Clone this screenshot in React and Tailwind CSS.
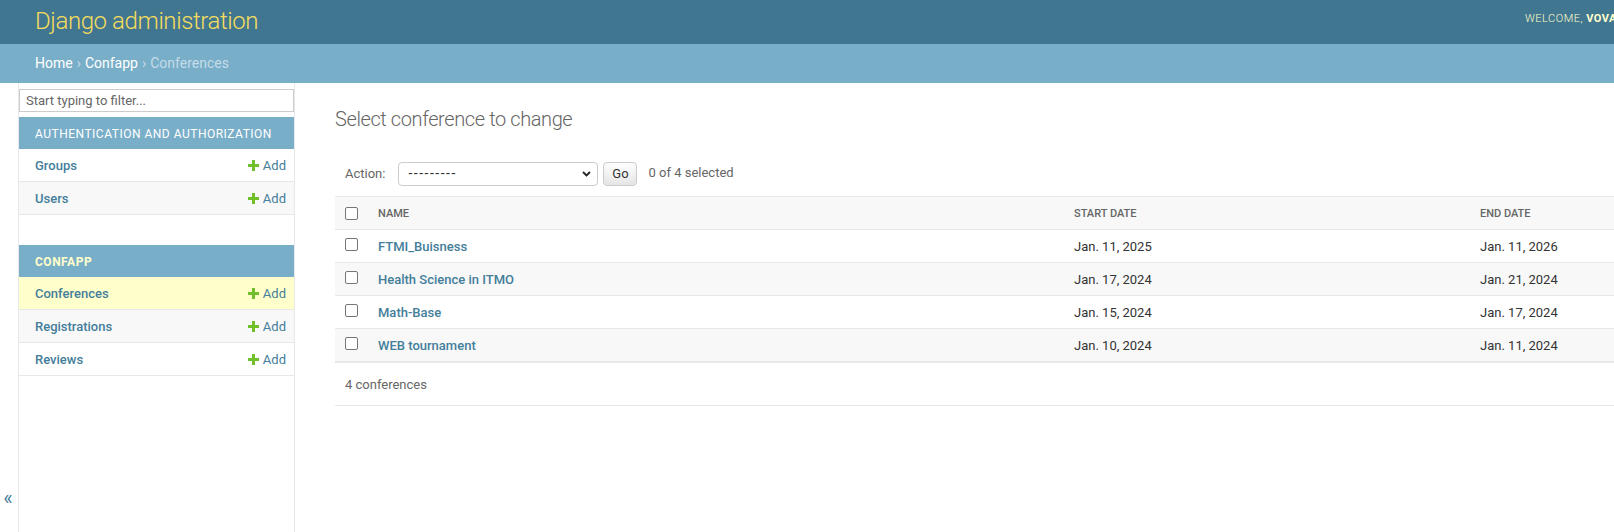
import React from "react";

function Plus() {
  return (
    <svg width="11" height="11" viewBox="0 0 11 11" className="shrink-0">
      <path d="M4 0h3v4h4v3H7v4H4V7H0V4h4z" fill="#70bf2b" />
    </svg>
  );
}

function Check({ cls }) {
  return (
    <span
      className={
        "inline-block w-[13px] h-[13px] border border-[#767676] rounded-[2px] bg-white " +
        (cls || "")
      }
    />
  );
}

function SideRow({ name, bg }) {
  return (
    <div
      className={
        "flex items-center justify-between h-[33px] border-b border-[#e8e8e8] pl-[16px] pr-[8px] pt-[2px] " +
        bg
      }
    >
      <span className="text-[13px] font-medium text-[#447e9b]">{name}</span>
      <span className="flex items-center gap-[4px] text-[13px] text-[#447e9b]">
        <span className="-mt-[2px]">
          <Plus />
        </span>
        Add
      </span>
    </div>
  );
}

const rows = [
  ["FTMI_Buisness", "Jan. 11, 2025", "Jan. 11, 2026", "bg-white"],
  ["Health Science in ITMO", "Jan. 17, 2024", "Jan. 21, 2024", "bg-[#f8f8f8]"],
  ["Math-Base", "Jan. 15, 2024", "Jan. 17, 2024", "bg-white"],
  ["WEB tournament", "Jan. 10, 2024", "Jan. 11, 2024", "bg-[#f8f8f8]"],
];

export default function App() {
  return (
    <div className="w-[1614px] h-[532px] overflow-hidden bg-white text-[#333] font-['Roboto',sans-serif]">
      {/* Header */}
      <header className="h-[44px] bg-[#417690] flex items-start pl-[35px]">
        <h1 className="mt-[5px] leading-[32px] text-[24px] tracking-[-0.4px] font-light text-[#f5dd5d] whitespace-nowrap">
          Django administration
        </h1>
        <div className="ml-auto w-[89px] mt-[11px] whitespace-nowrap text-[11px] leading-[16px] uppercase tracking-[0.5px] text-[#ffffcc] font-light">
          Welcome, <strong className="font-bold">vova</strong>
        </div>
      </header>

      {/* Breadcrumbs */}
      <div className="h-[39px] bg-[#79aec8] flex items-center pl-[35px] text-[14px] text-[#c4dce8]">
        <span className="text-white">Home</span>
        <span className="mx-[4px]">›</span>
        <span className="text-white">Confapp</span>
        <span className="mx-[4px]">›</span>
        <span>Conferences</span>
      </div>

      {/* Body */}
      <div className="flex h-[449px]">
        {/* toggle */}
        <div className="w-[19px] shrink-0 border-r border-[#e8e8e8] flex flex-col items-center justify-end pb-[24px]">
          <span className="text-[20px] leading-[20px] text-[#447e9b] -ml-[2px]">«</span>
        </div>

        {/* sidebar */}
        <nav className="w-[276px] shrink-0 border-r border-[#e8e8e8]">
          <div className="mt-[6px] mb-[5px] h-[23px] border border-[#ccc] flex items-center px-[6px] text-[13px] text-[#666]">
            Start typing to filter...
          </div>

          <div className="mb-[30px]">
            <div className="h-[32px] bg-[#79aec8] flex items-center pl-[16px] pt-[1px] text-[12px] uppercase tracking-[0.5px] text-white">
              Authentication and Authorization
            </div>
            <SideRow name="Groups" bg="bg-white" />
            <SideRow name="Users" bg="bg-[#f8f8f8]" />
          </div>

          <div>
            <div className="h-[32px] bg-[#79aec8] flex items-center pl-[16px] pt-[1px] text-[12px] uppercase tracking-[0.5px] text-[#ffffcc] font-bold">
              Confapp
            </div>
            <SideRow name="Conferences" bg="bg-[#ffffcc]" />
            <SideRow name="Registrations" bg="bg-[#f8f8f8]" />
            <SideRow name="Reviews" bg="bg-white" />
          </div>
        </nav>

        {/* main */}
        <main className="flex-1 min-w-0 pl-[40px] pt-[20px]">
          <h1 className="h-[28px] leading-[28px] mt-[2px] mb-[18px] text-[20px] tracking-[-0.4px] font-light text-[#666] whitespace-nowrap">
            Select conference to change
          </h1>

          <div className="h-[45px] flex items-center pl-[10px] text-[13px] text-[#666] whitespace-nowrap">
            <span className="pt-[1px]">Action:</span>
            <div className="ml-[13px] w-[200px] h-[24px] border border-[#ccc] rounded-[4px] bg-white flex items-center justify-between pl-[9px] pr-[6px] text-[14px] text-[#333]">
              <span className="tracking-[1.5px]">---------</span>
              <svg width="9" height="6" viewBox="0 0 9 6">
                <path d="M1 1l3.5 3.5L8 1" stroke="#222" strokeWidth="1.8" fill="none" />
              </svg>
            </div>
            <div className="ml-[5px] w-[34px] h-[24px] border border-[#ccc] rounded-[4px] bg-white shadow-[inset_0_-15px_20px_-10px_rgba(0,0,0,0.15)] flex items-center justify-center text-[13px] text-[#333]">
              Go
            </div>
            <span className="ml-[11px] -mt-[2px]">0 of 4 selected</span>
          </div>

          <div className="w-[1543px]">
            <div className="grid grid-cols-[35px_696px_406px_406px] h-[34px] border-t border-b border-[#e8e8e8] bg-[#f8f8f8] items-center text-[11px] uppercase text-[#666] font-medium">
              <div className="pl-[10px] flex items-center">
                <Check />
              </div>
              <div className="pl-[8px] pt-[2px]">Name</div>
              <div className="pl-[8px] pt-[2px]">Start date</div>
              <div className="pl-[8px] pt-[2px]">End date</div>
            </div>
            {rows.map(([n, s, e, bg]) => (
              <div
                key={n}
                className={
                  "grid grid-cols-[35px_696px_406px_406px] h-[33px] border-b border-[#e8e8e8] items-center text-[13px] " +
                  bg
                }
              >
                <div className="pl-[10px] flex items-center">
                  <Check cls="mb-[3px]" />
                </div>
                <div className="pl-[8px] pt-[1px] font-medium text-[#447e9b]">{n}</div>
                <div className="pl-[8px] pt-[1px] text-[#333]">{s}</div>
                <div className="pl-[8px] pt-[1px] text-[#333]">{e}</div>
              </div>
            ))}
            <div className="h-[44px] border-t border-b border-[#e8e8e8] flex items-center pl-[10px] pt-[2px] text-[13px] text-[#666]">
              4 conferences
            </div>
          </div>
        </main>
      </div>
    </div>
  );
}
